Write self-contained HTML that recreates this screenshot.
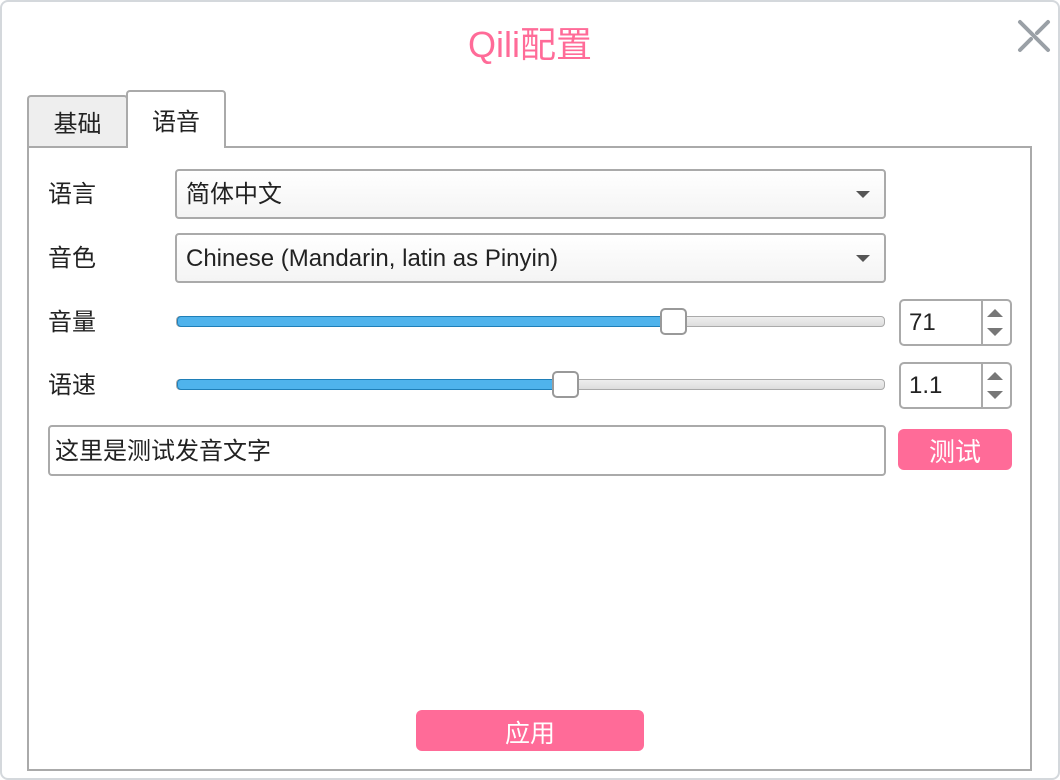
<!DOCTYPE html>
<html><head><meta charset="utf-8"><style>
*{box-sizing:border-box;margin:0;padding:0}
body{width:1060px;height:780px;background:#fff;font-family:"Liberation Sans","Noto Sans CJK SC",sans-serif;color:#222;position:relative;overflow:hidden}
.abs{position:absolute}
.win{left:0;top:0;width:1060px;height:780px;border:2px solid #d4d8dc;border-radius:8px}
.title{left:0;width:1060px;top:16px;text-align:center;font-size:36px;color:#ff6b98}
.tab{border:2px solid #aaa;border-bottom:none;border-radius:4px 4px 0 0;font-size:24px;text-align:center}
.panel{left:27px;top:146px;width:1005px;height:625px;border:2px solid #aaa}
.lbl{left:48px;font-size:24px;line-height:30px}
.combo{left:175px;width:711px;height:50px;border:2px solid #aaa;border-radius:4px;background:linear-gradient(#fff,#f4f4f4);font-size:24px;line-height:30px;padding:9px 0 0 9px}
.combo:after{content:"";position:absolute;right:14px;top:20px;border-left:7px solid transparent;border-right:7px solid transparent;border-top:7px solid #555}
.track{left:176px;width:709px;height:11px;border:1px solid #aaa;border-radius:4px;background:linear-gradient(#eee,#ddd)}
.fill{left:0;top:-1px;height:11px;border:1px solid #1f7fb8;border-radius:4px;background:#4fb3ec}
.handle{width:27px;height:27px;border:2px solid #999;border-radius:5px;background:#fff}
.spin{left:899px;width:113px;height:47px;border:2px solid #aaa;border-radius:5px;font-size:24px;line-height:30px;padding:7px 0 0 8px}
.spin .sep{position:absolute;left:80px;top:0;width:2px;height:43px;background:#aaa}
.up{position:absolute;right:7px;top:8px;border-left:8px solid transparent;border-right:8px solid transparent;border-bottom:8px solid #777}
.dn{position:absolute;right:7px;top:27px;border-left:8px solid transparent;border-right:8px solid transparent;border-top:8px solid #777}
.btn{background:#ff6b98;color:#fff;border-radius:6px;text-align:center;font-size:26px}
</style></head><body>
<div class="abs win"></div>
<div class="abs title">Qili配置</div>
<svg class="abs" style="left:1016px;top:18px" width="36" height="36"><path d="M4 4 L32 32 M4 32 L15 21 M21 15 L32 4" stroke="#9aa0a6" stroke-width="4" stroke-linecap="round" fill="none"/></svg>
<div class="abs tab" style="left:27px;top:95px;width:101px;height:52px;background:#eee;padding-top:7px">基础</div>
<div class="abs panel"></div>
<div class="abs tab" style="left:126px;top:90px;width:100px;height:58px;background:#fff;padding-top:10px;z-index:2">语音</div>
<div class="abs lbl" style="top:180px">语言</div>
<div class="abs combo" style="top:169px">简体中文</div>
<div class="abs lbl" style="top:244px">音色</div>
<div class="abs combo" style="top:233px">Chinese (Mandarin, latin as Pinyin)</div>
<div class="abs lbl" style="top:308px">音量</div>
<div class="abs track" style="top:316px"><div class="abs fill" style="width:490px"></div></div>
<div class="abs handle" style="left:660px;top:308px"></div>
<div class="abs spin" style="top:299px">71<div class="sep"></div><div class="up"></div><div class="dn"></div></div>
<div class="abs lbl" style="top:371px">语速</div>
<div class="abs track" style="top:379px"><div class="abs fill" style="width:384px"></div></div>
<div class="abs handle" style="left:552px;top:371px"></div>
<div class="abs spin" style="top:362px">1.1<div class="sep"></div><div class="up"></div><div class="dn"></div></div>
<div class="abs" style="left:48px;top:425px;width:838px;height:51px;border:2px solid #aaa;border-radius:4px;font-size:24px;line-height:30px;padding:10px 0 0 5px">这里是测试发音文字</div>
<div class="abs btn" style="left:898px;top:429px;width:114px;height:41px;padding-top:3px">测试</div>
<div class="abs btn" style="left:416px;top:710px;width:228px;height:41px;padding-top:4px;font-size:25px">应用</div>
</body></html>
